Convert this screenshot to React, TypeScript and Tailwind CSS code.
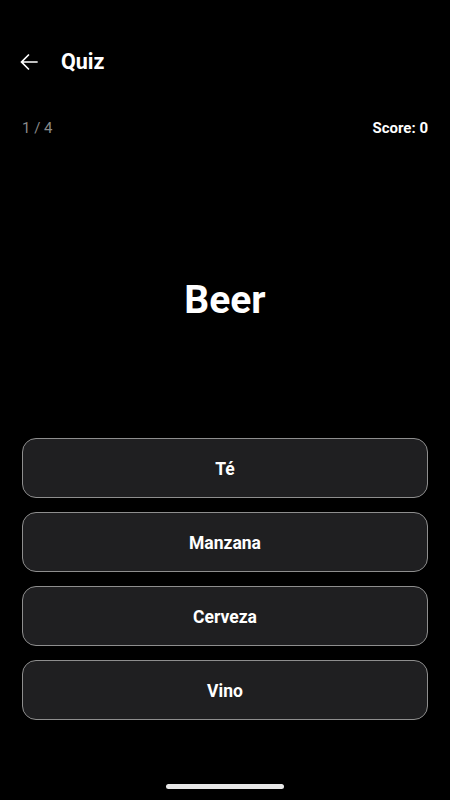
import { useState } from 'react'

const options = ['Té', 'Manzana', 'Cerveza', 'Vino']

function BackArrow() {
  return (
    <svg viewBox="0 0 24 24" className="h-[26px] w-[26px]" fill="white">
      <path d="M20 11.25H6.87l5.6-5.6-1.06-1.06L4 12l7.41 7.41 1.06-1.06-5.6-5.6H20v-1.5z" />
    </svg>
  )
}

export default function App() {
  const [score] = useState(0)

  return (
    <div
      className="flex h-[800px] w-full flex-col bg-black text-white"
      style={{ fontFamily: 'Roboto, "Noto Sans", sans-serif' }}
    >
      {/* Top bar */}
      <div className="mt-[34px] flex h-[56px] items-center px-[16px]">
        <button className="flex h-[26px] w-[26px] items-center justify-center">
          <BackArrow />
        </button>
        <h1 className="ml-[19px] text-[21.5px] font-bold">Quiz</h1>
      </div>

      {/* Progress */}
      <div className="mt-[28px] flex h-[20px] items-center justify-between px-[22px]">
        <span className="text-[15px] text-[#8a8a8a]">1 / 4</span>
        <span className="text-[15px] font-bold">Score: {score}</span>
      </div>

      {/* Word */}
      <div className="mt-[139px] flex h-[46px] items-center justify-center">
        <h2 className="text-[39px] leading-none font-bold">Beer</h2>
      </div>

      {/* Options */}
      <div className="mt-[115px] flex flex-col gap-[14px] px-[22px]">
        {options.map((o) => (
          <button
            key={o}
            className="flex h-[60px] items-center justify-center rounded-[14px] border border-[#8e8e8e] bg-[#1f1f21] pt-[2px] text-[17.5px] font-bold text-white"
          >
            {o}
          </button>
        ))}
      </div>

      {/* Home indicator */}
      <div className="mt-[64px] flex justify-center">
        <div className="h-[5px] w-[118px] rounded-full bg-[#e8e8e8]" />
      </div>
    </div>
  )
}
